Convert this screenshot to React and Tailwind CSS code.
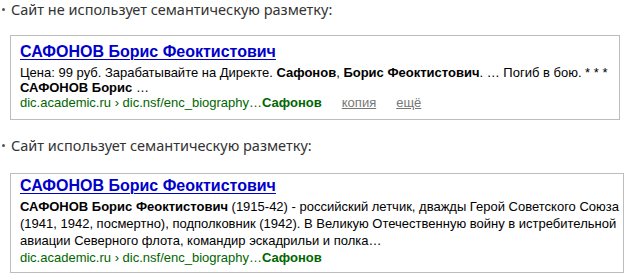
import React from "react";

const heading = "font-['Noto_Sans','Open_Sans',sans-serif] text-[14.5px] leading-[18px] text-[#333]";

function Bullet({ children }) {
  return (
    <div className={`flex items-center ${heading}`}>
      <span className="ml-[2px] mr-[6px] h-[3px] w-[3px] rounded-full bg-[#555]" />
      <span>{children}</span>
    </div>
  );
}

function Title() {
  return (
    <a href="#" className="block text-[16px] font-bold leading-[22px] text-[#0000cc] underline decoration-1 underline-offset-2">
      САФОНОВ Борис Феоктистович
    </a>
  );
}

function Url({ extra, lh }) {
  return (
    <div className={`flex items-center text-[13px] ${lh}`}>
      <span className="text-[#006600]">
        dic.academic.ru › dic.nsf/enc_biography…<b>Сафонов</b>
      </span>
      {extra && (
        <>
          <a href="#" className="ml-[20px] text-[#777] underline">копия</a>
          <a href="#" className="ml-[20px] text-[#777] underline">ещё</a>
        </>
      )}
    </div>
  );
}

export default function App() {
  return (
    <div className="h-[274px] w-[632px] bg-white font-['Liberation_Sans',Arial,sans-serif]">
      <Bullet>Сайт не использует семантическую разметку:</Bullet>

      <div className="ml-[10px] mt-[17px] w-[610px] border border-[#bdbdbd] pl-[9px] pt-[5px] pb-[9px]">
        <Title />
        <div className="mt-[2px] text-[13px] leading-[15px] text-black">
          Цена: 99 руб. Зарабатывайте на Директе. <b>Сафонов</b>, <b>Борис Феоктистович</b>. … Погиб в бою. * * *
          <br />
          <b>САФОНОВ Борис</b> …
        </div>
        <Url extra lh="leading-[15px]" />
      </div>

      <div className="mt-[16px]">
        <Bullet>Сайт использует семантическую разметку:</Bullet>
      </div>

      <div className="ml-[10px] mt-[19px] w-[614px] border border-[#bdbdbd] pl-[9px] pt-[1px] pb-[6px]">
        <Title />
        <div className="mt-[1px] text-[13px] leading-[17px] text-black">
          <b>САФОНОВ Борис Феоктистович</b> (1915-42) - российский летчик, дважды Герой Советского Союза (1941, 1942, посмертно), подполковник (1942). В Великую Отечественную войну в истребительной авиации Северного флота, командир эскадрильи и полка…
        </div>
        <Url lh="leading-[17px]" />
      </div>
    </div>
  );
}
